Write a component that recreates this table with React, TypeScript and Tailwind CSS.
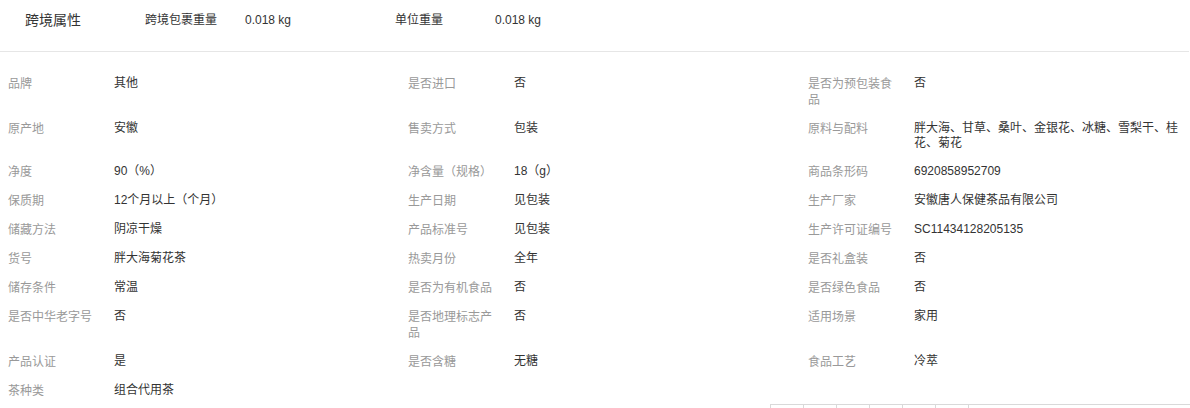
import React from "react";

type Item = [string, string];

const rows: Item[][] = [
  [["品牌", "其他"], ["是否进口", "否"], ["是否为预包装食品", "否"]],
  [["原产地", "安徽"], ["售卖方式", "包装"], ["原料与配料", "胖大海、甘草、桑叶、金银花、冰糖、雪梨干、桂花、菊花"]],
  [["净度", "90（%）"], ["净含量（规格）", "18（g）"], ["商品条形码", "6920858952709"]],
  [["保质期", "12个月以上（个月）"], ["生产日期", "见包装"], ["生产厂家", "安徽唐人保健茶品有限公司"]],
  [["储藏方法", "阴凉干燥"], ["产品标准号", "见包装"], ["生产许可证编号", "SC11434128205135"]],
  [["货号", "胖大海菊花茶"], ["热卖月份", "全年"], ["是否礼盒装", "否"]],
  [["储存条件", "常温"], ["是否为有机食品", "否"], ["是否绿色食品", "否"]],
  [["是否中华老字号", "否"], ["是否地理标志产品", "否"], ["适用场景", "家用"]],
  [["产品认证", "是"], ["是否含糖", "无糖"], ["食品工艺", "冷萃"]],
  [["茶种类", "组合代用茶"]],
];

function Cell({ item }: { item?: Item }) {
  if (!item) return <div />;
  return (
    <div className="flex items-start">
      <div className="w-[114px] shrink-0 pl-2 pr-[16px] text-[#999] leading-[16px]">{item[0]}</div>
      <div className="w-[270px] text-[#333] leading-[15px]">{item[1]}</div>
    </div>
  );
}

export default function App() {
  return (
    <div
      className="w-[1190px] h-[408px] overflow-hidden bg-white text-[12px] leading-[15px]"
      style={{ fontFamily: '"Liberation Sans", "Noto Sans CJK SC", sans-serif' }}
    >
      <div className="h-[52px] border-b border-[#e6e6e6] w-[1189px] flex items-start pt-[10px] leading-[20px] text-[#333]">
        <div className="pl-[25px] w-[145px] text-[14px]">跨境属性</div>
        <div className="w-[100px]">跨境包裹重量</div>
        <div className="w-[150px]">0.018 kg</div>
        <div className="w-[100px]">单位重量</div>
        <div>0.018 kg</div>
      </div>
      <div className="pt-[17px]">
        {rows.map((r, i) => (
          <div key={i} className="grid grid-cols-[400px_400px_390px] pt-[7px] pb-[6px]">
            <Cell item={r[0]} />
            <Cell item={r[1]} />
            <Cell item={r[2]} />
          </div>
        ))}
      </div>
      <div className="ml-[770px] -mt-[1px] flex border-t border-l border-[#d9d9d9]">
        {[0, 1, 2, 3, 4, 5].map((k) => (
          <div key={k} className="w-[33px] h-[30px] border-r border-[#d9d9d9]" />
        ))}
      </div>
    </div>
  );
}
